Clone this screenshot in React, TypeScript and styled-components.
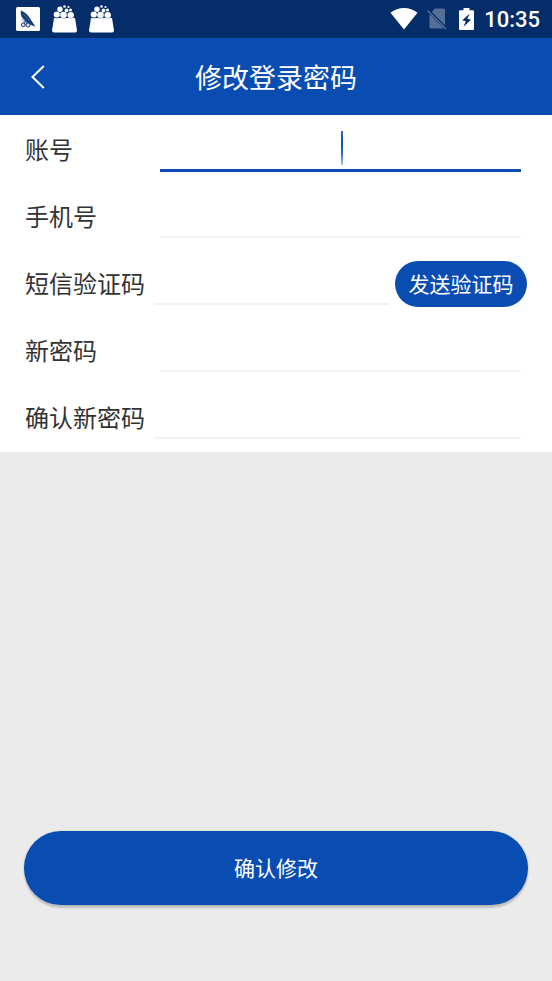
import React from "react";
import styled, { createGlobalStyle } from "styled-components";

const BLUE = "#094db3";

const GlobalStyle = createGlobalStyle`
  *, *::before, *::after { box-sizing: border-box; }
  html, body, #root { height: 100%; }
  body {
    margin: 0;
    background: #ebebeb;
    font-family: Roboto, "Noto Sans CJK SC", sans-serif;
  }
  button, input { font: inherit; }
`;

const Screen = styled.div`
  display: flex;
  flex-direction: column;
  min-height: 100%;
`;

const StatusBar = styled.div`
  display: flex;
  align-items: center;
  justify-content: space-between;
  height: 38px;
  padding: 0 12px 0 16px;
  background: #042d69;
  color: #fff;
`;

const IconGroup = styled.div<{ $gap: number }>`
  display: flex;
  align-items: center;
  gap: ${(p) => p.$gap}px;

  svg {
    display: block;
  }
`;

const Clock = styled.time`
  font-size: 22px;
  font-weight: 500;
  line-height: 28px;
  padding-top: 2px;
`;

const Header = styled.header`
  display: grid;
  grid-template-columns: 76px 1fr 76px;
  align-items: center;
  height: 77px;
  background: ${BLUE};
  color: #fff;
`;

const BackButton = styled.button`
  display: flex;
  align-items: center;
  justify-content: center;
  height: 76px;
  padding: 0;
  border: 0;
  background: none;
  color: inherit;
`;

const Title = styled.h1`
  margin: 0;
  padding-top: 4px;
  font-size: 27px;
  font-weight: 400;
  line-height: 40px;
  text-align: center;
`;

const Form = styled.form`
  flex: 1;
  display: flex;
  flex-direction: column;
  justify-content: space-between;
`;

const Fields = styled.div`
  padding: 1px 0;
  background: #fff;
`;

const Row = styled.div<{ $withAction?: boolean }>`
  display: flex;
  align-items: center;
  height: 67px;
  padding: 0 ${(p) => (p.$withAction ? 25 : 31)}px 0 25px;
`;

const Label = styled.label<{ $long?: boolean }>`
  flex: 0 0 ${(p) => (p.$long ? 129 : 135)}px;
  padding-top: 2px;
  color: #333;
  font-size: 24px;
  line-height: 36px;
  white-space: nowrap;
`;

const InputWrap = styled.div`
  position: relative;
  flex: 1;
  min-width: 0;
  align-self: flex-start;
`;

const Input = styled.input<{ $active?: boolean }>`
  display: block;
  width: 100%;
  height: ${(p) => (p.$active ? 56 : 55)}px;
  padding: 0;
  border: 0;
  border-bottom: ${(p) => (p.$active ? `3px solid ${BLUE}` : "2px solid #f2f2f2")};
  border-radius: 0;
  outline: 0;
  background: transparent;
  color: #333;
  font-size: 24px;
  text-align: center;
`;

const Caret = styled.span`
  position: absolute;
  top: 15px;
  left: 50%;
  width: 2px;
  height: 34px;
  background: linear-gradient(#2b66c0, ${BLUE} 35%, #2b66c0 65%, #a9c1e6);
`;

const SendButton = styled.button`
  flex: none;
  width: 132px;
  height: 46px;
  margin-left: 6px;
  padding: 2px 0 0;
  border: 0;
  border-radius: 23px;
  background: ${BLUE};
  color: #fff;
  font-size: 21px;
  line-height: 32px;
  white-space: nowrap;
`;

const SubmitButton = styled.button`
  height: 74px;
  margin: 40px 24px 76px;
  padding: 2px 0 0;
  border: 0;
  border-radius: 37px;
  background: ${BLUE};
  color: #fff;
  font-size: 21px;
  line-height: 32px;
  box-shadow: 0 3px 2px rgba(0, 0, 0, 0.18), 0 0 2px rgba(0, 0, 0, 0.15);
`;

const WingIcon = () => (
  <svg width="24" height="24" viewBox="0 0 24 24" aria-hidden="true">
    <rect width="24" height="24" rx="1.5" fill="#fff" />
    <path
      d="M5 3.500C9 5 12 8 14 11.500L19.500 19.800 14 17.500 9 14C6 11 4 7.500 5 3.500Z"
      fill="#123a75"
    />
    <path d="M5.500 9.500l5 5.500M5.500 12.500l4 3M7.500 7l6 7" stroke="#6b83a9" strokeWidth=".7" />
    <g fill="#dfe5ee" stroke="#123a75" strokeWidth="1">
      <circle cx="7.300" cy="17.800" r="1.900" />
      <circle cx="12" cy="18" r="2.100" />
      <circle cx="9.500" cy="15.800" r="1.400" />
    </g>
  </svg>
);

const BasketIcon = () => (
  <svg width="25" height="28" viewBox="0 0 25 28" aria-hidden="true">
    <g fill="#fff">
      <circle cx="4.800" cy="9.500" r="3.100" />
      <circle cx="11.500" cy="10" r="3.300" />
      <circle cx="18.700" cy="10.300" r="3.200" />
      <circle cx="8" cy="4.200" r="2.700" />
      <circle cx="14.500" cy="5.500" r="1.900" />
      <circle cx="18.500" cy="5" r="1.500" />
      <circle cx="12.500" cy="1.500" r="1.300" />
      <circle cx="16.500" cy="2" r="1.100" />
      <path d="M2 13h21L25 25.500q0 2-2 2H2q-2 0-2-2Z" />
    </g>
    <path
      d="M1.800 12.500q3 1.500 6.400 0q3.500 1.500 7.200 0q3.300 1.500 6.600 0"
      fill="none"
      stroke="#042d69"
      strokeWidth=".5"
      opacity=".6"
    />
  </svg>
);

const WifiIcon = () => (
  <svg width="28" height="22" viewBox="0 0 28 22" aria-hidden="true">
    <path d="M.5 4.800C8-1.500 20-1.500 27.500 4.800L14 21.500Z" fill="#fff" />
  </svg>
);

const NoSimIcon = () => (
  <svg width="20" height="22" viewBox="0 0 20 22" aria-hidden="true">
    <g fill="#566f97">
      <path d="M8 .5H16.500q1.500 0 1.500 1.500V17.200L4.800 4Z" />
      <path d="M2.500 6.200 17 20.500H4q-1.500 0-1.500-1.500Z" />
      <path d="M1.200 2.200 19.500 20.500 18.500 21.500.2 3.200Z" />
    </g>
  </svg>
);

const BatteryIcon = () => (
  <svg width="15" height="22" viewBox="0 0 15 22" aria-hidden="true">
    <path d="M4.500 0h6v2.300H14q1 0 1 1V21q0 1-1 1H1q-1 0-1-1V3.300q0-1 1-1h3.500Z" fill="#fff" />
    <path d="M10.800 5.500 3.300 12.300l3.500 1L4.500 18.800 12 11.700 8.300 10.700Z" fill="#042d69" />
  </svg>
);

const BackIcon = () => (
  <svg width="14" height="24" viewBox="0 0 14 24" aria-hidden="true">
    <path d="M12.800 1 1.500 12l11.300 11" fill="none" stroke="currentColor" strokeWidth="2" />
  </svg>
);

type Field = {
  id: string;
  label: string;
  type: string;
  long?: boolean;
  active?: boolean;
  action?: string;
};

const fields: Field[] = [
  { id: "account", label: "账号", type: "text", active: true },
  { id: "phone", label: "手机号", type: "tel" },
  { id: "code", label: "短信验证码", type: "text", long: true, action: "发送验证码" },
  { id: "password", label: "新密码", type: "password" },
  { id: "confirm", label: "确认新密码", type: "password", long: true },
];

export default function App() {
  return (
    <>
      <GlobalStyle />
      <Screen>
        <StatusBar>
          <IconGroup $gap={12}>
            <WingIcon />
            <BasketIcon />
            <BasketIcon />
          </IconGroup>
          <IconGroup $gap={12}>
            <IconGroup $gap={9}>
              <WifiIcon />
              <NoSimIcon />
            </IconGroup>
            <IconGroup $gap={10}>
              <BatteryIcon />
              <Clock>10:35</Clock>
            </IconGroup>
          </IconGroup>
        </StatusBar>
        <Header>
          <BackButton type="button" aria-label="返回">
            <BackIcon />
          </BackButton>
          <Title>修改登录密码</Title>
        </Header>
        <Form onSubmit={(e) => e.preventDefault()}>
          <Fields>
            {fields.map((f) => (
              <Row key={f.id} $withAction={!!f.action}>
                <Label htmlFor={f.id} $long={f.long}>
                  {f.label}
                </Label>
                <InputWrap>
                  <Input id={f.id} type={f.type} autoComplete="off" $active={f.active} />
                  {f.active && <Caret />}
                </InputWrap>
                {f.action && <SendButton type="button">{f.action}</SendButton>}
              </Row>
            ))}
          </Fields>
          <SubmitButton type="submit">确认修改</SubmitButton>
        </Form>
      </Screen>
    </>
  );
}
